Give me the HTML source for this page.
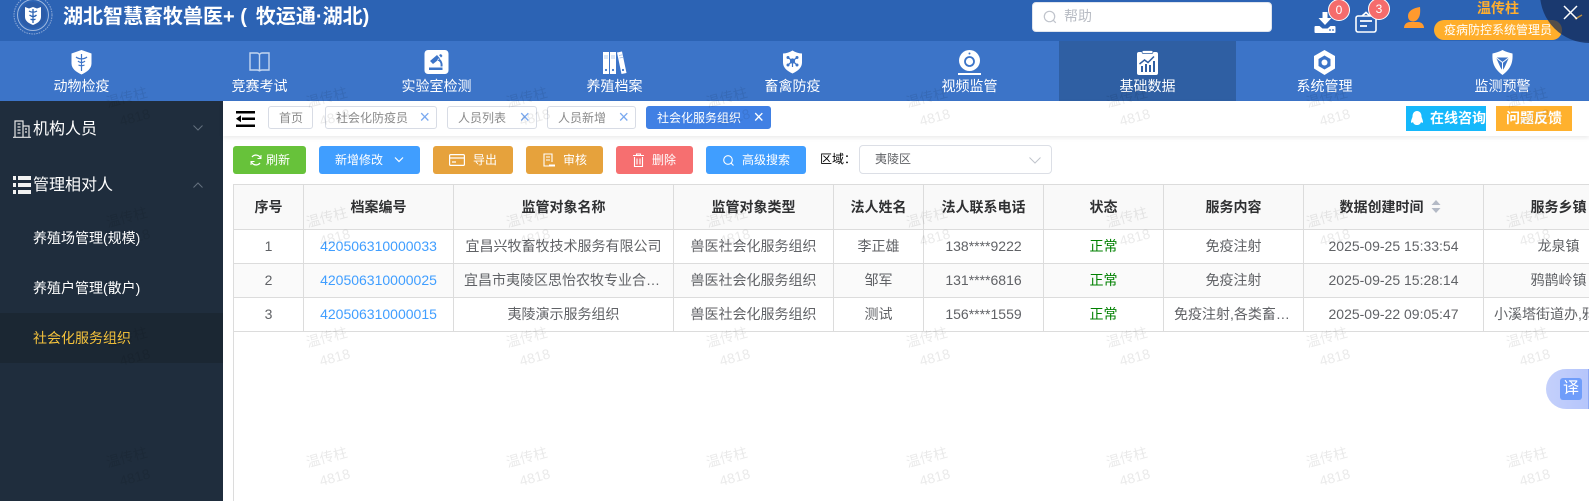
<!DOCTYPE html>
<html lang="zh-CN"><head><meta charset="utf-8"><title>湖北智慧畜牧兽医+</title>
<style>
*{box-sizing:border-box}
html,body{margin:0;padding:0;width:1589px;height:501px;overflow:hidden;background:#fff;font-family:"Liberation Sans","Noto Sans CJK SC",sans-serif;color:#606266}
.a{position:absolute}
svg{display:block;overflow:visible}
.hdr{left:0;top:0;width:1589px;height:41px;background:#2c63b4}
.nav{left:0;top:41px;width:1589px;height:60px;background:#3c74c8}
.ni{position:absolute;top:41px;width:177px;height:60px;text-align:center;color:#fff;font-size:14px;line-height:20px;padding-top:35px}
.ni svg{position:absolute;top:9px;left:76px;width:25px;height:25px}
.side{left:0;top:101px;width:223px;height:400px;background:#1f2d3d}
.s1{position:absolute;left:33px;color:#fff;font-size:16px;line-height:22px}
.s2{position:absolute;left:33px;color:#fff;font-size:14px;line-height:20px}
.tab{position:absolute;top:106px;height:23px;border:1px solid #d8dce5;border-radius:3px;background:#fff;font-size:12px;line-height:22px;color:#8a8a8a;padding-left:10px;white-space:nowrap}
.tab i{position:absolute;right:6px;top:0;font-style:normal;color:#7aa9f0;font-size:18px;line-height:21px}
.btn{position:absolute;top:146px;height:28px;border-radius:3px;color:#fff;font-size:12px;line-height:28px;white-space:nowrap}
.btn span{position:absolute;top:0}
.btn svg{position:absolute}
table{position:absolute;left:233px;top:184px;width:1401px;border-collapse:separate;border-spacing:0;table-layout:fixed;border-left:1px solid #dcdcdc;border-top:1px solid #dcdcdc;font-size:14px}
th,td{border-right:1px solid #dcdcdc;border-bottom:1px solid #dcdcdc;text-align:center;padding:0 10px;white-space:nowrap;overflow:hidden;text-overflow:ellipsis}
th{height:45px;background:#f9f9f9;color:#303133;font-weight:700}
td{height:34px;color:#606266;padding-bottom:2px}
tr.z td{background:#fafafa}
td.l{color:#409eff}
td.g{color:#008000}
.wm{left:0;top:0;width:1589px;height:501px;pointer-events:none}
.wm text{fill:#000;fill-opacity:.085;font-family:"Liberation Sans","Noto Sans CJK SC",sans-serif;font-size:14px;text-anchor:middle}
</style></head><body>

<div class="a hdr"></div>
<div class="a nav"></div>
<div class="a" style="left:1059px;top:41px;width:177px;height:60px;background:#2f5fa3"></div>

<!-- logo -->
<svg class="a" style="left:13px;top:-5px" width="40" height="40" viewBox="0 0 40 40">
<circle cx="20" cy="20" r="19" fill="none" stroke="#b9c9e6" stroke-opacity=".7" stroke-width="1" stroke-dasharray="1.500 1"/>
<circle cx="20" cy="20" r="15.500" fill="none" stroke="#c6d4ec" stroke-opacity=".75" stroke-width="1"/>
<circle cx="20" cy="20" r="13" fill="#2c5ca8"/>
<path d="M12 12l4 1.500 4-1.500 4 1.500 4-1.500v10c0 4-4 6.500-8 8-4-1.500-8-4-8-8z" fill="#fff"/>
<path d="M20 14v14M16 16c2.500 1.500 5.500 1.500 8 0M16.500 20c2.500 2 5 2 7 0M17.500 24c1.500 1 3.500 1 5 0" stroke="#2c63b4" stroke-width="1.300" fill="none"/>
</svg>
<div class="a" style="left:63px;top:3px;font-size:20px;font-weight:700;color:#fff;line-height:28px;white-space:nowrap">湖北智慧畜牧兽医+ (<span style="display:inline-block;width:9px"></span>牧运通·湖北)</div>

<!-- search -->
<div class="a" style="left:1032px;top:2px;width:240px;height:30px;background:#fff;border-radius:4px;border:1px solid #dfe4ed"></div>
<svg class="a" style="left:1043px;top:10px" width="14" height="14" viewBox="0 0 14 14"><circle cx="6.500" cy="6.500" r="5.200" fill="none" stroke="#c0c4cc" stroke-width="1.200"/><path d="M10.300 10.300l2.500 2.500" stroke="#c0c4cc" stroke-width="1.200"/></svg>
<div class="a" style="left:1064px;top:6px;font-size:14px;line-height:21px;color:#b8bcc4">帮助</div>

<!-- header icons -->
<svg class="a" style="left:1314px;top:12px" width="22" height="21" viewBox="0 0 22 21"><path d="M8.500 0h5v6h4l-6.500 7-6.500-7h4z" fill="#fff"/><path d="M1.500 14h4l3 2.500h5l3-2.500h4a1 1 0 0 1 1 1v5a1 1 0 0 1-1 1h-19a1 1 0 0 1-1-1v-5a1 1 0 0 1 1-1z" fill="#fff"/><circle cx="16" cy="18" r=".9" fill="#2c63b4"/><circle cx="19" cy="18" r=".9" fill="#2c63b4"/></svg>
<svg class="a" style="left:1355px;top:11px" width="22" height="22" viewBox="0 0 22 22"><rect x="1" y="5" width="20" height="16" rx="2" fill="none" stroke="#fff" stroke-width="1.600"/><path d="M7 5l4-3.500 4 3.500" fill="none" stroke="#fff" stroke-width="1.600"/><path d="M5 10h12M5 15h7" stroke="#fff" stroke-width="1.800"/></svg>
<div class="a" style="left:1328px;top:-1px;width:22px;height:22px;border-radius:50%;background:#f56c6c;border:1px solid #fff;color:#fff;font-size:12px;line-height:20px;text-align:center">0</div>
<div class="a" style="left:1368px;top:-2px;width:22px;height:22px;border-radius:50%;background:#f56c6c;border:1px solid #fff;color:#fff;font-size:12px;line-height:20px;text-align:center">3</div>
<svg class="a" style="left:1404px;top:7px" width="20" height="22" viewBox="0 0 20 22"><path d="M4 9C4 4 9 1 16 0c.5 5 0 9-1.500 11-1.500 2.500-3.500 3.500-5.500 3.500C6 14.500 4 12.500 4 9z" fill="#ff9a2e"/><path d="M0 21c0-3.500 2.500-6 6-6h8c3.500 0 6 2.500 6 6z" fill="#ff9a2e"/></svg>
<div class="a" style="left:1477px;top:-2px;font-size:14px;font-weight:700;color:#ffae2e;line-height:20px">温传柱</div>
<div class="a" style="left:1434px;top:20px;width:128px;height:20px;border-radius:10px;background:#ffae2b;color:#fff;font-size:12px;line-height:20px;text-align:center;white-space:nowrap">疫病防控系统管理员</div>
<div class="a" style="left:1540px;top:-56px;width:99px;height:99px;border-radius:50%;background:rgba(20,42,85,.72)"></div>
<svg class="a" style="left:1563px;top:5px" width="20" height="15" viewBox="0 0 20 15"><path d="M12 14l7-4" stroke="#b98a3a" stroke-width="1.500"/><path d="M1 1l13 13M14 1L1 14" stroke="#fff" stroke-width="1.500"/></svg>

<!-- nav -->
<div class="ni" style="left:-7px"><svg viewBox="0 0 25 25"><path d="M12.500 0l10 3.500v10c0 5-4.500 8.500-10 11-5.500-2.500-10-6-10-11v-10z" fill="#fff"/><path d="M12.500 4v17M7 7c3 2.500 8 2.500 11 0M9 11c2 2 5 2 7 0M9.500 15c2 1 4 1 6 0" stroke="#3c74c8" stroke-width="1.200" fill="none"/></svg>动物检疫</div>
<div class="ni" style="left:171px"><svg viewBox="0 0 25 25"><path d="M3 3h7c1.500 0 2.500 1 2.500 2.500 0-1.500 1-2.500 2.500-2.500h7v17h-7c-1.500 0-2.500.5-2.500 1.500 0-1-1-1.500-2.500-1.500H3zM12.500 5.500v16" fill="none" stroke="#c4d6f0" stroke-width="1.400"/></svg>竞赛考试</div>
<div class="ni" style="left:348px"><svg viewBox="0 0 25 25"><rect x=".5" width="24" height="24" rx="3.500" fill="#fff"/><path d="M6 11l7-6 3 3.500-7 5.500zM15 5l2-1 1.500 2-1.500 1.500zM13 10.500c3 .5 4 2.500 3.500 6h2c.5-3.500-1-7-4-8zM5 17.500h13.500V20H5z" fill="#3c74c8"/></svg>实验室检测</div>
<div class="ni" style="left:526px"><svg viewBox="0 0 25 25"><rect x="1" y="2" width="6" height="22" fill="#fff"/><rect x="8" y="2" width="6" height="22" fill="#fff"/><path d="M15 2.500l5-1 4.500 21.500-5 1z" fill="#fff"/><circle cx="4" cy="20" r="1.100" fill="#3c74c8"/><circle cx="11" cy="20" r="1.100" fill="#3c74c8"/><circle cx="21" cy="20" r="1.100" fill="#3c74c8"/><path d="M2 6h4M2 8h4M9 6h4M9 8h4M17 5.500l4-.8M17.500 8l4-.8" stroke="#9fbde6" stroke-width=".8"/></svg>养殖档案</div>
<div class="ni" style="left:704px"><svg viewBox="0 0 25 25"><path d="M12.500 .5c3 1.800 6 2.800 9.500 3v9c0 5-4 8.500-9.500 11-5.500-2.500-9.500-6-9.500-11v-9c3.500-.2 6.500-1.200 9.500-3z" fill="#fff"/><path d="M12.500 11L8 7.500M12.500 11L17 7.500M12.500 11L8 15M12.500 11L17 15M12.500 11v6" stroke="#3c74c8" stroke-width="1.200"/><circle cx="12.500" cy="11" r="2.600" fill="#3c74c8"/><circle cx="8" cy="7.500" r="1.500" fill="#3c74c8"/><circle cx="17" cy="7.500" r="1.500" fill="#3c74c8"/><circle cx="8" cy="15" r="1.500" fill="#3c74c8"/><circle cx="17" cy="15" r="1.500" fill="#3c74c8"/></svg>畜禽防疫</div>
<div class="ni" style="left:881px"><svg viewBox="0 0 25 25"><circle cx="12.500" cy="10.500" r="10.500" fill="#fff"/><circle cx="12.500" cy="11.500" r="4.500" fill="none" stroke="#3c74c8" stroke-width="1.800"/><circle cx="12.500" cy="3.500" r="1" fill="#3c74c8"/><rect x="1" y="23" width="23" height="2" fill="#fff"/></svg>视频监管</div>
<div class="ni" style="left:1059px"><svg viewBox="0 0 25 25"><rect x="2" y="2" width="21" height="23" rx="2" fill="#fff"/><rect x="7" y=".5" width="11" height="3" rx="1.500" fill="#fff" stroke="#2f5fa3" stroke-width=".7"/><path d="M4.500 14l5-4 3.500 2.500L19 6.500" fill="none" stroke="#2f5fa3" stroke-width="1.500"/><path d="M6 16h2v6H6zM10 14h2v8h-2zM14 15h2v7h-2zM18 11h2v11h-2z" fill="#2f5fa3"/></svg>基础数据</div>
<div class="ni" style="left:1236px"><svg viewBox="0 0 25 25"><path d="M12.500 0l10.500 6v12.500L12.500 25 2 18.500V6z" fill="#fff"/><path d="M12.500 5.500l6 3.500v7l-6 3.500-6-3.500V9z" fill="#3c74c8"/><circle cx="12.500" cy="12.500" r="3" fill="#fff"/></svg>系统管理</div>
<div class="ni" style="left:1414px"><svg viewBox="0 0 25 25"><path d="M12.500 0c3.500 1.800 6.500 2.800 10 3.500 .5 8-1 15-10 21.500C3.500 18.500 2 11.500 2.500 3.500c3.500-.7 6.500-1.700 10-3.500z" fill="#fff"/><path d="M6 7.500h13l-4.500 10-2 3-2-3z" fill="#3c74c8"/><path d="M6 7.500l6.500 5 6.500-5M12.500 12.500v8" stroke="#fff" stroke-width="1" fill="none"/></svg>监测预警</div>

<!-- sidebar -->
<div class="a side"></div>
<div class="a" style="left:0;top:313px;width:223px;height:50px;background:#1b2733"></div>
<svg class="a" style="left:13px;top:120px" width="18" height="18" viewBox="0 0 18 18"><path d="M2 17V1h8v16M10 6h6v11M0 17.300h18M4.500 4h3M4.500 7h3M4.500 10h3M4.500 13h3M12 9h2M12 12h2" fill="none" stroke="#e6e6e6" stroke-width="1.200"/></svg>
<div class="s1" style="top:119px">机构人员</div>
<svg class="a" style="left:193px;top:125px" width="10" height="6" viewBox="0 0 10 6"><path d="M.5.500L5 5 9.500.500" fill="none" stroke="#64707e" stroke-width="1"/></svg>
<svg class="a" style="left:13px;top:176px" width="18" height="18" viewBox="0 0 18 18"><path d="M0 0h3v4H0zM5 0h13v4H5zM0 7h3v4H0zM5 7h13v4H5zM0 14h3v4H0zM5 14h13v4H5z" fill="#f2f2f2"/></svg>
<div class="s1" style="top:175px">管理相对人</div>
<svg class="a" style="left:193px;top:182px" width="10" height="6" viewBox="0 0 10 6"><path d="M.5 5.500L5 1l4.500 4.500" fill="none" stroke="#64707e" stroke-width="1"/></svg>
<div class="s2" style="top:228px">养殖场管理(规模)</div>
<div class="s2" style="top:278px">养殖户管理(散户)</div>
<div class="s2" style="top:328px;color:#f4c23c">社会化服务组织</div>

<!-- tabs bar -->
<div class="a" style="left:223px;top:101px;width:1366px;height:35px;background:#fff;box-shadow:0 2px 4px rgba(0,0,0,.08)"></div>
<svg class="a" style="left:236px;top:111px" width="19" height="16" viewBox="0 0 19 16"><path d="M0 0h19v2.500H0zM6 6.500h13V9H6zM0 13.500h19V16H0z" fill="#000"/><path d="M0 7.700l5-3.500v7z" fill="#000"/></svg>
<div class="tab" style="left:268px;width:45px;padding-left:10px">首页</div>
<div class="tab" style="left:325px;width:112px">社会化防疫员<i>×</i></div>
<div class="tab" style="left:447px;width:90px">人员列表<i>×</i></div>
<div class="tab" style="left:547px;width:89px">人员新增<i>×</i></div>
<div class="tab" style="left:646px;width:125px;background:#4080e4;border-color:#4080e4;color:#fff">社会化服务组织<i style="color:#fff">×</i></div>
<div class="a" style="left:1406px;top:106px;width:80px;height:25px;background:#15b8fb;color:#fff;font-size:14px;font-weight:700;line-height:25px;padding-left:24px;white-space:nowrap;overflow:hidden">在线咨询</div>
<svg class="a" style="left:1411px;top:111px" width="12" height="15" viewBox="0 0 12 15"><path d="M6 0c3 0 4.500 2.500 4.500 5.500 0 1 1.500 3.500 1.500 5.500 0 1-1 1-2 0-.5 2-2 3-4 3s-3.500-1-4-3c-1 1-2 1-2 0 0-2 1.500-4.500 1.500-5.500C1.500 2.500 3 0 6 0z" fill="#fff"/></svg>
<div class="a" style="left:1496px;top:106px;width:76px;height:25px;background:#ffb12e;color:#fff;font-size:14px;font-weight:700;line-height:25px;text-align:center;white-space:nowrap">问题反馈</div>

<!-- toolbar -->
<div class="btn" style="left:233px;width:73px;background:#67c23a"><svg style="left:17px;top:8px" width="12" height="12" viewBox="0 0 12 12"><path d="M10.500 4A5 5 0 0 0 2 3M1.500 8A5 5 0 0 0 10 9" fill="none" stroke="#fff" stroke-width="1.300"/><path d="M11 1v3.500H7.500M1 11V7.500h3.500" fill="none" stroke="#fff" stroke-width="1"/></svg><span style="left:33px">刷新</span></div>
<div class="btn" style="left:319px;width:101px;background:#409eff"><span style="left:16px">新增修改</span><svg style="left:75px;top:11px" width="10" height="6" viewBox="0 0 10 6"><path d="M1 .5L5 4.500 9 .5" fill="none" stroke="#fff" stroke-width="1.200"/></svg></div>
<div class="btn" style="left:433px;width:80px;background:#e6a23c"><svg style="left:16px;top:8px" width="16" height="12" viewBox="0 0 16 12"><rect x=".6" y=".6" width="14.800" height="10.800" rx="1.200" fill="none" stroke="#fff" stroke-width="1.200"/><path d="M1 4h14M3 8h4" stroke="#fff" stroke-width="1.200"/></svg><span style="left:40px">导出</span></div>
<div class="btn" style="left:526px;width:77px;background:#e6a23c"><svg style="left:17px;top:7px" width="12" height="14" viewBox="0 0 12 14"><path d="M9 13H1V1h8v8M3 4h4M3 7h4" fill="none" stroke="#fff" stroke-width="1.100"/><path d="M6 11.500h6V13.500H6z" fill="#fff"/></svg><span style="left:37px">审核</span></div>
<div class="btn" style="left:616px;width:77px;background:#f66f70"><svg style="left:17px;top:7px" width="11" height="14" viewBox="0 0 11 14"><path d="M0 2.500h11M3.500 2.500V1h4v1.500M1.500 4v9.500h8V4M4 5.500v6M7 5.500v6" fill="none" stroke="#fff" stroke-width="1.100"/></svg><span style="left:36px">删除</span></div>
<div class="btn" style="left:706px;width:100px;background:#409eff"><svg style="left:17px;top:9px" width="11" height="11" viewBox="0 0 11 11"><circle cx="5" cy="5" r="4.300" fill="none" stroke="#fff" stroke-width="1.100"/><path d="M8.200 8.200L10.500 10.500" stroke="#fff" stroke-width="1.100"/></svg><span style="left:36px">高级搜索</span></div>
<div class="a" style="left:820px;top:149px;font-size:12px;line-height:20px;color:#000">区域：</div>
<div class="a" style="left:859px;top:145px;width:193px;height:29px;border:1px solid #dcdfe6;border-radius:4px;background:#fff;font-size:12px;line-height:27px;padding-left:15px;color:#606266">夷陵区</div>
<svg class="a" style="left:1029px;top:157px" width="12" height="7" viewBox="0 0 12 7"><path d="M.5.500L6 6l5.500-5.500" fill="none" stroke="#c0c4cc" stroke-width="1"/></svg>

<!-- table -->
<div class="a" style="left:233px;top:184px;width:1px;height:317px;background:#dcdcdc"></div>
<table>
<colgroup><col style="width:70px"><col style="width:150px"><col style="width:220px"><col style="width:160px"><col style="width:90px"><col style="width:120px"><col style="width:120px"><col style="width:140px"><col style="width:180px"><col style="width:150px"></colgroup>
<tr><th>序号</th><th>档案编号</th><th>监管对象名称</th><th>监管对象类型</th><th>法人姓名</th><th>法人联系电话</th><th>状态</th><th>服务内容</th><th style="padding-right:34px">数据创建时间</th><th>服务乡镇</th></tr>
<tr><td>1</td><td class="l">420506310000033</td><td>宜昌兴牧畜牧技术服务有限公司</td><td>兽医社会化服务组织</td><td>李正雄</td><td>138****9222</td><td class="g">正常</td><td>免疫注射</td><td>2025-09-25 15:33:54</td><td>龙泉镇</td></tr>
<tr class="z"><td>2</td><td class="l">420506310000025</td><td>宜昌市夷陵区思怡农牧专业合作社有限公司</td><td>兽医社会化服务组织</td><td>邹军</td><td>131****6816</td><td class="g">正常</td><td>免疫注射</td><td>2025-09-25 15:28:14</td><td>鸦鹊岭镇</td></tr>
<tr><td>3</td><td class="l">420506310000015</td><td>夷陵演示服务组织</td><td>兽医社会化服务组织</td><td>测试</td><td>156****1559</td><td class="g">正常</td><td>免疫注射,各类畜禽防疫服务</td><td>2025-09-22 09:05:47</td><td>小溪塔街道办,鸦鹊岭镇,龙泉镇</td></tr>
</table>
<svg class="a" style="left:1431px;top:200px" width="10" height="13" viewBox="0 0 10 13"><path d="M5 0l4.500 5h-9zM5 13L.5 8h9z" fill="#b4bac6"/></svg>

<!-- translate float -->
<div class="a" style="left:1546px;top:369px;width:43px;height:40px;border-radius:20px 0 0 20px;background:linear-gradient(90deg,#c4d0fb,#b5c5fb);box-shadow:inset -1px 0 0 #8fa9f5"></div>
<div class="a" style="left:1560px;top:378px;width:22px;height:22px;border-radius:3px;background:#6f9dfa;color:#fff;font-size:16px;line-height:22px;text-align:center">译</div>

<!-- watermark -->
<svg class="a wm" width="1589" height="501" viewBox="0 0 1589 501"><g transform="translate(0,4)">
<g transform="translate(128,98) rotate(-15)"><text>温传柱</text></g><g transform="translate(136,118) rotate(-15)"><text>4818</text></g>
<g transform="translate(328,98) rotate(-15)"><text>温传柱</text></g><g transform="translate(336,118) rotate(-15)"><text>4818</text></g>
<g transform="translate(528,98) rotate(-15)"><text>温传柱</text></g><g transform="translate(536,118) rotate(-15)"><text>4818</text></g>
<g transform="translate(728,98) rotate(-15)"><text>温传柱</text></g><g transform="translate(736,118) rotate(-15)"><text>4818</text></g>
<g transform="translate(928,98) rotate(-15)"><text>温传柱</text></g><g transform="translate(936,118) rotate(-15)"><text>4818</text></g>
<g transform="translate(1128,98) rotate(-15)"><text>温传柱</text></g><g transform="translate(1136,118) rotate(-15)"><text>4818</text></g>
<g transform="translate(1328,98) rotate(-15)"><text>温传柱</text></g><g transform="translate(1336,118) rotate(-15)"><text>4818</text></g>
<g transform="translate(1528,98) rotate(-15)"><text>温传柱</text></g><g transform="translate(1536,118) rotate(-15)"><text>4818</text></g>
<g transform="translate(128,218) rotate(-15)"><text>温传柱</text></g><g transform="translate(136,238) rotate(-15)"><text>4818</text></g>
<g transform="translate(328,218) rotate(-15)"><text>温传柱</text></g><g transform="translate(336,238) rotate(-15)"><text>4818</text></g>
<g transform="translate(528,218) rotate(-15)"><text>温传柱</text></g><g transform="translate(536,238) rotate(-15)"><text>4818</text></g>
<g transform="translate(728,218) rotate(-15)"><text>温传柱</text></g><g transform="translate(736,238) rotate(-15)"><text>4818</text></g>
<g transform="translate(928,218) rotate(-15)"><text>温传柱</text></g><g transform="translate(936,238) rotate(-15)"><text>4818</text></g>
<g transform="translate(1128,218) rotate(-15)"><text>温传柱</text></g><g transform="translate(1136,238) rotate(-15)"><text>4818</text></g>
<g transform="translate(1328,218) rotate(-15)"><text>温传柱</text></g><g transform="translate(1336,238) rotate(-15)"><text>4818</text></g>
<g transform="translate(1528,218) rotate(-15)"><text>温传柱</text></g><g transform="translate(1536,238) rotate(-15)"><text>4818</text></g>
<g transform="translate(128,338) rotate(-15)"><text>温传柱</text></g><g transform="translate(136,358) rotate(-15)"><text>4818</text></g>
<g transform="translate(328,338) rotate(-15)"><text>温传柱</text></g><g transform="translate(336,358) rotate(-15)"><text>4818</text></g>
<g transform="translate(528,338) rotate(-15)"><text>温传柱</text></g><g transform="translate(536,358) rotate(-15)"><text>4818</text></g>
<g transform="translate(728,338) rotate(-15)"><text>温传柱</text></g><g transform="translate(736,358) rotate(-15)"><text>4818</text></g>
<g transform="translate(928,338) rotate(-15)"><text>温传柱</text></g><g transform="translate(936,358) rotate(-15)"><text>4818</text></g>
<g transform="translate(1128,338) rotate(-15)"><text>温传柱</text></g><g transform="translate(1136,358) rotate(-15)"><text>4818</text></g>
<g transform="translate(1328,338) rotate(-15)"><text>温传柱</text></g><g transform="translate(1336,358) rotate(-15)"><text>4818</text></g>
<g transform="translate(1528,338) rotate(-15)"><text>温传柱</text></g><g transform="translate(1536,358) rotate(-15)"><text>4818</text></g>
<g transform="translate(128,458) rotate(-15)"><text>温传柱</text></g><g transform="translate(136,478) rotate(-15)"><text>4818</text></g>
<g transform="translate(328,458) rotate(-15)"><text>温传柱</text></g><g transform="translate(336,478) rotate(-15)"><text>4818</text></g>
<g transform="translate(528,458) rotate(-15)"><text>温传柱</text></g><g transform="translate(536,478) rotate(-15)"><text>4818</text></g>
<g transform="translate(728,458) rotate(-15)"><text>温传柱</text></g><g transform="translate(736,478) rotate(-15)"><text>4818</text></g>
<g transform="translate(928,458) rotate(-15)"><text>温传柱</text></g><g transform="translate(936,478) rotate(-15)"><text>4818</text></g>
<g transform="translate(1128,458) rotate(-15)"><text>温传柱</text></g><g transform="translate(1136,478) rotate(-15)"><text>4818</text></g>
<g transform="translate(1328,458) rotate(-15)"><text>温传柱</text></g><g transform="translate(1336,478) rotate(-15)"><text>4818</text></g>
<g transform="translate(1528,458) rotate(-15)"><text>温传柱</text></g><g transform="translate(1536,478) rotate(-15)"><text>4818</text></g>
</g></svg>
</body></html>
